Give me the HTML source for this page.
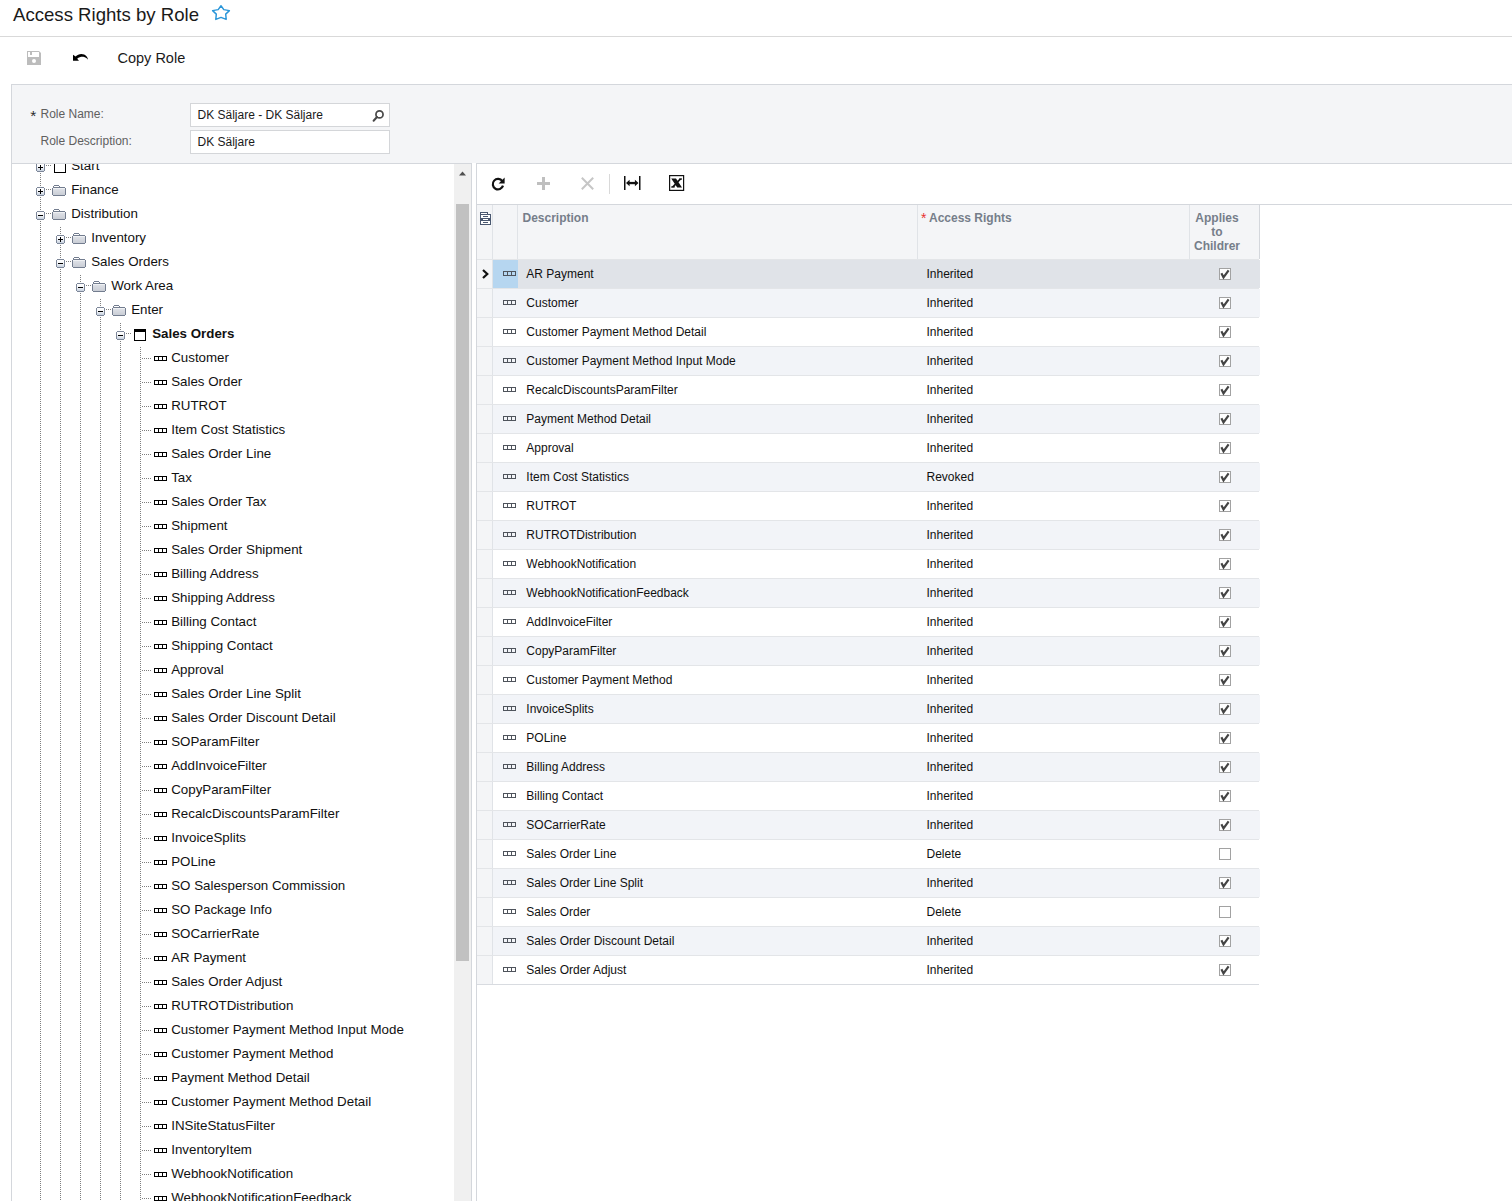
<!DOCTYPE html>
<html><head><meta charset="utf-8"><title>Access Rights by Role</title>
<style>
html,body{margin:0;padding:0;background:#fff;width:1512px;height:1201px;overflow:hidden}
body{position:relative;font-family:"Liberation Sans", sans-serif}
.a{position:absolute}
.t{position:absolute;white-space:nowrap}
svg.a{overflow:visible}
</style></head><body>
<div class="t" style="left:13px;top:4.06px;font-size:18.6px;line-height:21px;color:#1a1a1a;font-weight:normal;">Access Rights by Role</div>
<svg class="a" style="left:211px;top:4px" width="20" height="18" viewBox="0 0 20 18"><path d="M10 1.8 L12.8 5.6 L18.4 6.6 L14.7 10.1 L15.2 15.4 L10 13.4 L4.8 15.4 L5.3 10.1 L1.6 6.6 L7.2 5.6 Z" fill="none" stroke="#2a96d9" stroke-width="1.45" stroke-linejoin="round"/></svg>
<div class="a" style="left:0;top:36px;width:1512px;height:1px;background:#d9d9d9"></div>
<svg class="a" style="left:27px;top:51px" width="14" height="14" viewBox="0 0 14 14"><path d="M0 0 H12 L14 2 V14 H0 Z" fill="#bcbcbc"/><rect x="1" y="1" width="11" height="5" fill="#fff"/><rect x="3" y="1" width="2" height="3" fill="#bcbcbc"/><circle cx="7" cy="10" r="2" fill="#fff"/></svg>
<svg class="a" style="left:68px;top:46px" width="26" height="22" viewBox="0 0 26 22"><path d="M5 8.7 L5 14.8 L11 14.8 L9.2 12.8 C11.2 11 13.8 10.6 16.2 11 C17.8 11.4 19 12.3 19.9 13.8 C19.8 11.6 18.5 9.6 16.2 8.6 C13.2 7.5 9.8 8.2 7.6 10.6 Z" fill="#000"/></svg>
<div class="t" style="left:117.5px;top:50.18px;font-size:14.5px;line-height:17px;color:#1a1a1a;font-weight:normal;">Copy Role</div>
<div class="a" style="left:11px;top:84px;width:1501px;height:79px;background:#f4f5f7;border-top:1px solid #d4d7dc;border-left:1px solid #d4d7dc;box-sizing:border-box"></div>
<div class="t" style="left:30.3px;top:106.83px;font-size:15.5px;line-height:18px;color:#2a2a2a;font-weight:normal;">*</div>
<div class="t" style="left:40.5px;top:106.84px;font-size:12px;line-height:14px;color:#5f5f5f;font-weight:normal;">Role Name:</div>
<div class="t" style="left:40.5px;top:133.84px;font-size:12px;line-height:14px;color:#5f5f5f;font-weight:normal;">Role Description:</div>
<div class="a" style="left:190px;top:103px;width:200px;height:24px;background:#fff;border:1px solid #d4d6d9;box-sizing:border-box"></div>
<div class="a" style="left:190px;top:130px;width:200px;height:24px;background:#fff;border:1px solid #d4d6d9;box-sizing:border-box"></div>
<div class="t" style="left:197.5px;top:107.54px;font-size:12px;line-height:14px;color:#1a1a1a;font-weight:normal;">DK Säljare - DK Säljare</div>
<div class="t" style="left:197.5px;top:134.54px;font-size:12px;line-height:14px;color:#1a1a1a;font-weight:normal;">DK Säljare</div>
<svg class="a" style="left:372px;top:110px" width="12" height="12" viewBox="0 0 12 12"><circle cx="7.5" cy="4.4" r="3.55" fill="none" stroke="#4a4a4a" stroke-width="1.75"/><path d="M5 7 L1.6 10.7" stroke="#4a4a4a" stroke-width="2" stroke-linecap="round"/></svg>
<div class="a" style="left:11px;top:163px;width:461px;height:1px;background:#d4d7dc"></div><div class="a" style="left:476px;top:163px;width:1036px;height:1px;background:#d4d7dc"></div><div class="a" style="left:472px;top:163px;width:4px;height:1px;background:#fff"></div>
<svg width="0" height="0" style="position:absolute">
<defs>
<linearGradient id="gx" x1="0" y1="0" x2="0" y2="1"><stop offset="0" stop-color="#ffffff"/><stop offset="0.45" stop-color="#f4f6f9"/><stop offset="1" stop-color="#c6d0de"/></linearGradient>
<linearGradient id="gf" x1="0" y1="0" x2="0" y2="1"><stop offset="0" stop-color="#fafbfc"/><stop offset="0.2" stop-color="#dcdfe5"/><stop offset="1" stop-color="#c9cdd5"/></linearGradient>
<g id="expbox" shape-rendering="crispEdges">
<rect x="1" y="1" width="7" height="7" fill="url(#gx)"/>
<rect x="1" y="0" width="7" height="1" fill="#7d8799"/><rect x="1" y="8" width="7" height="1" fill="#7d8799"/>
<rect x="0" y="1" width="1" height="7" fill="#7d8799"/><rect x="8" y="1" width="1" height="7" fill="#7d8799"/>
</g>
<g id="plus" shape-rendering="crispEdges"><use href="#expbox"/><rect x="2" y="4" width="5" height="1" fill="#000"/><rect x="4" y="2" width="1" height="5" fill="#000"/></g>
<g id="minus" shape-rendering="crispEdges"><use href="#expbox"/><rect x="2" y="4" width="5" height="1" fill="#000"/></g>
<g id="fold" shape-rendering="crispEdges">
<rect x="2" y="0" width="5" height="1" fill="#737d8f"/><rect x="1" y="1" width="1" height="1" fill="#737d8f"/><rect x="2" y="1" width="5" height="1" fill="#fff"/><rect x="7" y="1" width="1" height="1" fill="#737d8f"/>
<rect x="1" y="2" width="12" height="1" fill="#737d8f"/>
<rect x="1" y="3" width="12" height="7" fill="url(#gf)"/>
<rect x="0" y="3" width="1" height="7" fill="#737d8f"/><rect x="13" y="3" width="1" height="7" fill="#737d8f"/>
<rect x="1" y="10" width="12" height="1" fill="#737d8f"/>
</g>
<g id="win" shape-rendering="crispEdges">
<rect x="0" y="0" width="12" height="3" fill="#000"/><rect x="0" y="3" width="1" height="9" fill="#000"/><rect x="11" y="3" width="1" height="9" fill="#000"/><rect x="0" y="11" width="12" height="1" fill="#000"/>
</g>
<g id="leaf" shape-rendering="crispEdges">
<rect x="0" y="0" width="13" height="1" fill="#000"/><rect x="0" y="4" width="13" height="1" fill="#000"/>
<rect x="0" y="0" width="1" height="5" fill="#000"/><rect x="4" y="0" width="1" height="5" fill="#000"/><rect x="8" y="0" width="1" height="5" fill="#000"/><rect x="12" y="0" width="1" height="5" fill="#000"/>
</g>
<g id="gleaf" shape-rendering="crispEdges">
<rect x="0" y="0" width="13" height="1" fill="#4f545c"/><rect x="0" y="4" width="13" height="1" fill="#4f545c"/>
<rect x="0" y="0" width="1" height="5" fill="#4f545c"/><rect x="4" y="0" width="1" height="5" fill="#4f545c"/><rect x="8" y="0" width="1" height="5" fill="#4f545c"/><rect x="12" y="0" width="1" height="5" fill="#4f545c"/>
</g>
<g id="chk" shape-rendering="crispEdges"><rect x="0.5" y="0.5" width="11" height="11" fill="#fff" stroke="#a2a2a2"/></g>
</defs></svg>
<div class="a" style="left:11px;top:164px;width:443px;height:1037px;overflow:hidden;background:#fff;border-left:1px solid #d4d7dc;box-sizing:border-box"><div class="a" style="left:-12px;top:-164px;width:1512px;height:1201px"><div class="a" style="left:40px;top:165px;width:1px;height:1036px;background:repeating-linear-gradient(to bottom,#7f7f7f 0,#7f7f7f 1px,transparent 1px,transparent 2px)"></div>
<div class="a" style="left:60px;top:227px;width:1px;height:974px;background:repeating-linear-gradient(to bottom,#7f7f7f 0,#7f7f7f 1px,transparent 1px,transparent 2px)"></div>
<div class="a" style="left:80px;top:275px;width:1px;height:926px;background:repeating-linear-gradient(to bottom,#7f7f7f 0,#7f7f7f 1px,transparent 1px,transparent 2px)"></div>
<div class="a" style="left:100px;top:299px;width:1px;height:902px;background:repeating-linear-gradient(to bottom,#7f7f7f 0,#7f7f7f 1px,transparent 1px,transparent 2px)"></div>
<div class="a" style="left:120px;top:323px;width:1px;height:878px;background:repeating-linear-gradient(to bottom,#7f7f7f 0,#7f7f7f 1px,transparent 1px,transparent 2px)"></div>
<div class="a" style="left:140px;top:347px;width:1px;height:854px;background:repeating-linear-gradient(to bottom,#7f7f7f 0,#7f7f7f 1px,transparent 1px,transparent 2px)"></div>
<div class="a" style="left:46px;top:165px;width:6px;height:1px;background:repeating-linear-gradient(to right,#7f7f7f 0,#7f7f7f 1px,transparent 1px,transparent 2px)"></div>
<svg class="a" style="left:36px;top:163px" width="9" height="9"><use href="#plus"/></svg>
<svg class="a" style="left:54px;top:161px" width="12" height="12"><use href="#win"/></svg>
<div class="t" style="left:71.2px;top:157.88px;font-size:13.33px;line-height:15px;color:#111;font-weight:normal;">Start</div>
<div class="a" style="left:46px;top:189px;width:6px;height:1px;background:repeating-linear-gradient(to right,#7f7f7f 0,#7f7f7f 1px,transparent 1px,transparent 2px)"></div>
<svg class="a" style="left:36px;top:187px" width="9" height="9"><use href="#plus"/></svg>
<svg class="a" style="left:52px;top:185px" width="14" height="11"><use href="#fold"/></svg>
<div class="t" style="left:71.2px;top:181.88px;font-size:13.33px;line-height:15px;color:#111;font-weight:normal;">Finance</div>
<div class="a" style="left:46px;top:213px;width:6px;height:1px;background:repeating-linear-gradient(to right,#7f7f7f 0,#7f7f7f 1px,transparent 1px,transparent 2px)"></div>
<svg class="a" style="left:36px;top:211px" width="9" height="9"><use href="#minus"/></svg>
<svg class="a" style="left:52px;top:209px" width="14" height="11"><use href="#fold"/></svg>
<div class="t" style="left:71.2px;top:205.88px;font-size:13.33px;line-height:15px;color:#111;font-weight:normal;">Distribution</div>
<div class="a" style="left:66px;top:237px;width:6px;height:1px;background:repeating-linear-gradient(to right,#7f7f7f 0,#7f7f7f 1px,transparent 1px,transparent 2px)"></div>
<svg class="a" style="left:56px;top:235px" width="9" height="9"><use href="#plus"/></svg>
<svg class="a" style="left:72px;top:233px" width="14" height="11"><use href="#fold"/></svg>
<div class="t" style="left:91.2px;top:229.88px;font-size:13.33px;line-height:15px;color:#111;font-weight:normal;">Inventory</div>
<div class="a" style="left:66px;top:261px;width:6px;height:1px;background:repeating-linear-gradient(to right,#7f7f7f 0,#7f7f7f 1px,transparent 1px,transparent 2px)"></div>
<svg class="a" style="left:56px;top:259px" width="9" height="9"><use href="#minus"/></svg>
<svg class="a" style="left:72px;top:257px" width="14" height="11"><use href="#fold"/></svg>
<div class="t" style="left:91.2px;top:253.88px;font-size:13.33px;line-height:15px;color:#111;font-weight:normal;">Sales Orders</div>
<div class="a" style="left:86px;top:285px;width:6px;height:1px;background:repeating-linear-gradient(to right,#7f7f7f 0,#7f7f7f 1px,transparent 1px,transparent 2px)"></div>
<svg class="a" style="left:76px;top:283px" width="9" height="9"><use href="#minus"/></svg>
<svg class="a" style="left:92px;top:281px" width="14" height="11"><use href="#fold"/></svg>
<div class="t" style="left:111.2px;top:277.88px;font-size:13.33px;line-height:15px;color:#111;font-weight:normal;">Work Area</div>
<div class="a" style="left:106px;top:309px;width:6px;height:1px;background:repeating-linear-gradient(to right,#7f7f7f 0,#7f7f7f 1px,transparent 1px,transparent 2px)"></div>
<svg class="a" style="left:96px;top:307px" width="9" height="9"><use href="#minus"/></svg>
<svg class="a" style="left:112px;top:305px" width="14" height="11"><use href="#fold"/></svg>
<div class="t" style="left:131.2px;top:301.88px;font-size:13.33px;line-height:15px;color:#111;font-weight:normal;">Enter</div>
<div class="a" style="left:126px;top:333px;width:6px;height:1px;background:repeating-linear-gradient(to right,#7f7f7f 0,#7f7f7f 1px,transparent 1px,transparent 2px)"></div>
<svg class="a" style="left:116px;top:331px" width="9" height="9"><use href="#minus"/></svg>
<svg class="a" style="left:134px;top:329px" width="12" height="12"><use href="#win"/></svg>
<div class="t" style="left:152.2px;top:325.88px;font-size:13.33px;line-height:15px;color:#111;font-weight:bold;">Sales Orders</div>
<div class="a" style="left:142px;top:358px;width:10px;height:1px;background:repeating-linear-gradient(to right,#7f7f7f 0,#7f7f7f 1px,transparent 1px,transparent 2px)"></div>
<svg class="a" style="left:154px;top:356px" width="13" height="5"><use href="#leaf"/></svg>
<div class="t" style="left:171.2px;top:349.88px;font-size:13.33px;line-height:15px;color:#111;font-weight:normal;">Customer</div>
<div class="a" style="left:142px;top:382px;width:10px;height:1px;background:repeating-linear-gradient(to right,#7f7f7f 0,#7f7f7f 1px,transparent 1px,transparent 2px)"></div>
<svg class="a" style="left:154px;top:380px" width="13" height="5"><use href="#leaf"/></svg>
<div class="t" style="left:171.2px;top:373.88px;font-size:13.33px;line-height:15px;color:#111;font-weight:normal;">Sales Order</div>
<div class="a" style="left:142px;top:406px;width:10px;height:1px;background:repeating-linear-gradient(to right,#7f7f7f 0,#7f7f7f 1px,transparent 1px,transparent 2px)"></div>
<svg class="a" style="left:154px;top:404px" width="13" height="5"><use href="#leaf"/></svg>
<div class="t" style="left:171.2px;top:397.88px;font-size:13.33px;line-height:15px;color:#111;font-weight:normal;">RUTROT</div>
<div class="a" style="left:142px;top:430px;width:10px;height:1px;background:repeating-linear-gradient(to right,#7f7f7f 0,#7f7f7f 1px,transparent 1px,transparent 2px)"></div>
<svg class="a" style="left:154px;top:428px" width="13" height="5"><use href="#leaf"/></svg>
<div class="t" style="left:171.2px;top:421.88px;font-size:13.33px;line-height:15px;color:#111;font-weight:normal;">Item Cost Statistics</div>
<div class="a" style="left:142px;top:454px;width:10px;height:1px;background:repeating-linear-gradient(to right,#7f7f7f 0,#7f7f7f 1px,transparent 1px,transparent 2px)"></div>
<svg class="a" style="left:154px;top:452px" width="13" height="5"><use href="#leaf"/></svg>
<div class="t" style="left:171.2px;top:445.88px;font-size:13.33px;line-height:15px;color:#111;font-weight:normal;">Sales Order Line</div>
<div class="a" style="left:142px;top:478px;width:10px;height:1px;background:repeating-linear-gradient(to right,#7f7f7f 0,#7f7f7f 1px,transparent 1px,transparent 2px)"></div>
<svg class="a" style="left:154px;top:476px" width="13" height="5"><use href="#leaf"/></svg>
<div class="t" style="left:171.2px;top:469.88px;font-size:13.33px;line-height:15px;color:#111;font-weight:normal;">Tax</div>
<div class="a" style="left:142px;top:502px;width:10px;height:1px;background:repeating-linear-gradient(to right,#7f7f7f 0,#7f7f7f 1px,transparent 1px,transparent 2px)"></div>
<svg class="a" style="left:154px;top:500px" width="13" height="5"><use href="#leaf"/></svg>
<div class="t" style="left:171.2px;top:493.88px;font-size:13.33px;line-height:15px;color:#111;font-weight:normal;">Sales Order Tax</div>
<div class="a" style="left:142px;top:526px;width:10px;height:1px;background:repeating-linear-gradient(to right,#7f7f7f 0,#7f7f7f 1px,transparent 1px,transparent 2px)"></div>
<svg class="a" style="left:154px;top:524px" width="13" height="5"><use href="#leaf"/></svg>
<div class="t" style="left:171.2px;top:517.88px;font-size:13.33px;line-height:15px;color:#111;font-weight:normal;">Shipment</div>
<div class="a" style="left:142px;top:550px;width:10px;height:1px;background:repeating-linear-gradient(to right,#7f7f7f 0,#7f7f7f 1px,transparent 1px,transparent 2px)"></div>
<svg class="a" style="left:154px;top:548px" width="13" height="5"><use href="#leaf"/></svg>
<div class="t" style="left:171.2px;top:541.88px;font-size:13.33px;line-height:15px;color:#111;font-weight:normal;">Sales Order Shipment</div>
<div class="a" style="left:142px;top:574px;width:10px;height:1px;background:repeating-linear-gradient(to right,#7f7f7f 0,#7f7f7f 1px,transparent 1px,transparent 2px)"></div>
<svg class="a" style="left:154px;top:572px" width="13" height="5"><use href="#leaf"/></svg>
<div class="t" style="left:171.2px;top:565.88px;font-size:13.33px;line-height:15px;color:#111;font-weight:normal;">Billing Address</div>
<div class="a" style="left:142px;top:598px;width:10px;height:1px;background:repeating-linear-gradient(to right,#7f7f7f 0,#7f7f7f 1px,transparent 1px,transparent 2px)"></div>
<svg class="a" style="left:154px;top:596px" width="13" height="5"><use href="#leaf"/></svg>
<div class="t" style="left:171.2px;top:589.88px;font-size:13.33px;line-height:15px;color:#111;font-weight:normal;">Shipping Address</div>
<div class="a" style="left:142px;top:622px;width:10px;height:1px;background:repeating-linear-gradient(to right,#7f7f7f 0,#7f7f7f 1px,transparent 1px,transparent 2px)"></div>
<svg class="a" style="left:154px;top:620px" width="13" height="5"><use href="#leaf"/></svg>
<div class="t" style="left:171.2px;top:613.88px;font-size:13.33px;line-height:15px;color:#111;font-weight:normal;">Billing Contact</div>
<div class="a" style="left:142px;top:646px;width:10px;height:1px;background:repeating-linear-gradient(to right,#7f7f7f 0,#7f7f7f 1px,transparent 1px,transparent 2px)"></div>
<svg class="a" style="left:154px;top:644px" width="13" height="5"><use href="#leaf"/></svg>
<div class="t" style="left:171.2px;top:637.88px;font-size:13.33px;line-height:15px;color:#111;font-weight:normal;">Shipping Contact</div>
<div class="a" style="left:142px;top:670px;width:10px;height:1px;background:repeating-linear-gradient(to right,#7f7f7f 0,#7f7f7f 1px,transparent 1px,transparent 2px)"></div>
<svg class="a" style="left:154px;top:668px" width="13" height="5"><use href="#leaf"/></svg>
<div class="t" style="left:171.2px;top:661.88px;font-size:13.33px;line-height:15px;color:#111;font-weight:normal;">Approval</div>
<div class="a" style="left:142px;top:694px;width:10px;height:1px;background:repeating-linear-gradient(to right,#7f7f7f 0,#7f7f7f 1px,transparent 1px,transparent 2px)"></div>
<svg class="a" style="left:154px;top:692px" width="13" height="5"><use href="#leaf"/></svg>
<div class="t" style="left:171.2px;top:685.88px;font-size:13.33px;line-height:15px;color:#111;font-weight:normal;">Sales Order Line Split</div>
<div class="a" style="left:142px;top:718px;width:10px;height:1px;background:repeating-linear-gradient(to right,#7f7f7f 0,#7f7f7f 1px,transparent 1px,transparent 2px)"></div>
<svg class="a" style="left:154px;top:716px" width="13" height="5"><use href="#leaf"/></svg>
<div class="t" style="left:171.2px;top:709.88px;font-size:13.33px;line-height:15px;color:#111;font-weight:normal;">Sales Order Discount Detail</div>
<div class="a" style="left:142px;top:742px;width:10px;height:1px;background:repeating-linear-gradient(to right,#7f7f7f 0,#7f7f7f 1px,transparent 1px,transparent 2px)"></div>
<svg class="a" style="left:154px;top:740px" width="13" height="5"><use href="#leaf"/></svg>
<div class="t" style="left:171.2px;top:733.88px;font-size:13.33px;line-height:15px;color:#111;font-weight:normal;">SOParamFilter</div>
<div class="a" style="left:142px;top:766px;width:10px;height:1px;background:repeating-linear-gradient(to right,#7f7f7f 0,#7f7f7f 1px,transparent 1px,transparent 2px)"></div>
<svg class="a" style="left:154px;top:764px" width="13" height="5"><use href="#leaf"/></svg>
<div class="t" style="left:171.2px;top:757.88px;font-size:13.33px;line-height:15px;color:#111;font-weight:normal;">AddInvoiceFilter</div>
<div class="a" style="left:142px;top:790px;width:10px;height:1px;background:repeating-linear-gradient(to right,#7f7f7f 0,#7f7f7f 1px,transparent 1px,transparent 2px)"></div>
<svg class="a" style="left:154px;top:788px" width="13" height="5"><use href="#leaf"/></svg>
<div class="t" style="left:171.2px;top:781.88px;font-size:13.33px;line-height:15px;color:#111;font-weight:normal;">CopyParamFilter</div>
<div class="a" style="left:142px;top:814px;width:10px;height:1px;background:repeating-linear-gradient(to right,#7f7f7f 0,#7f7f7f 1px,transparent 1px,transparent 2px)"></div>
<svg class="a" style="left:154px;top:812px" width="13" height="5"><use href="#leaf"/></svg>
<div class="t" style="left:171.2px;top:805.88px;font-size:13.33px;line-height:15px;color:#111;font-weight:normal;">RecalcDiscountsParamFilter</div>
<div class="a" style="left:142px;top:838px;width:10px;height:1px;background:repeating-linear-gradient(to right,#7f7f7f 0,#7f7f7f 1px,transparent 1px,transparent 2px)"></div>
<svg class="a" style="left:154px;top:836px" width="13" height="5"><use href="#leaf"/></svg>
<div class="t" style="left:171.2px;top:829.88px;font-size:13.33px;line-height:15px;color:#111;font-weight:normal;">InvoiceSplits</div>
<div class="a" style="left:142px;top:862px;width:10px;height:1px;background:repeating-linear-gradient(to right,#7f7f7f 0,#7f7f7f 1px,transparent 1px,transparent 2px)"></div>
<svg class="a" style="left:154px;top:860px" width="13" height="5"><use href="#leaf"/></svg>
<div class="t" style="left:171.2px;top:853.88px;font-size:13.33px;line-height:15px;color:#111;font-weight:normal;">POLine</div>
<div class="a" style="left:142px;top:886px;width:10px;height:1px;background:repeating-linear-gradient(to right,#7f7f7f 0,#7f7f7f 1px,transparent 1px,transparent 2px)"></div>
<svg class="a" style="left:154px;top:884px" width="13" height="5"><use href="#leaf"/></svg>
<div class="t" style="left:171.2px;top:877.88px;font-size:13.33px;line-height:15px;color:#111;font-weight:normal;">SO Salesperson Commission</div>
<div class="a" style="left:142px;top:910px;width:10px;height:1px;background:repeating-linear-gradient(to right,#7f7f7f 0,#7f7f7f 1px,transparent 1px,transparent 2px)"></div>
<svg class="a" style="left:154px;top:908px" width="13" height="5"><use href="#leaf"/></svg>
<div class="t" style="left:171.2px;top:901.88px;font-size:13.33px;line-height:15px;color:#111;font-weight:normal;">SO Package Info</div>
<div class="a" style="left:142px;top:934px;width:10px;height:1px;background:repeating-linear-gradient(to right,#7f7f7f 0,#7f7f7f 1px,transparent 1px,transparent 2px)"></div>
<svg class="a" style="left:154px;top:932px" width="13" height="5"><use href="#leaf"/></svg>
<div class="t" style="left:171.2px;top:925.88px;font-size:13.33px;line-height:15px;color:#111;font-weight:normal;">SOCarrierRate</div>
<div class="a" style="left:142px;top:958px;width:10px;height:1px;background:repeating-linear-gradient(to right,#7f7f7f 0,#7f7f7f 1px,transparent 1px,transparent 2px)"></div>
<svg class="a" style="left:154px;top:956px" width="13" height="5"><use href="#leaf"/></svg>
<div class="t" style="left:171.2px;top:949.88px;font-size:13.33px;line-height:15px;color:#111;font-weight:normal;">AR Payment</div>
<div class="a" style="left:142px;top:982px;width:10px;height:1px;background:repeating-linear-gradient(to right,#7f7f7f 0,#7f7f7f 1px,transparent 1px,transparent 2px)"></div>
<svg class="a" style="left:154px;top:980px" width="13" height="5"><use href="#leaf"/></svg>
<div class="t" style="left:171.2px;top:973.88px;font-size:13.33px;line-height:15px;color:#111;font-weight:normal;">Sales Order Adjust</div>
<div class="a" style="left:142px;top:1006px;width:10px;height:1px;background:repeating-linear-gradient(to right,#7f7f7f 0,#7f7f7f 1px,transparent 1px,transparent 2px)"></div>
<svg class="a" style="left:154px;top:1004px" width="13" height="5"><use href="#leaf"/></svg>
<div class="t" style="left:171.2px;top:997.88px;font-size:13.33px;line-height:15px;color:#111;font-weight:normal;">RUTROTDistribution</div>
<div class="a" style="left:142px;top:1030px;width:10px;height:1px;background:repeating-linear-gradient(to right,#7f7f7f 0,#7f7f7f 1px,transparent 1px,transparent 2px)"></div>
<svg class="a" style="left:154px;top:1028px" width="13" height="5"><use href="#leaf"/></svg>
<div class="t" style="left:171.2px;top:1021.88px;font-size:13.33px;line-height:15px;color:#111;font-weight:normal;">Customer Payment Method Input Mode</div>
<div class="a" style="left:142px;top:1054px;width:10px;height:1px;background:repeating-linear-gradient(to right,#7f7f7f 0,#7f7f7f 1px,transparent 1px,transparent 2px)"></div>
<svg class="a" style="left:154px;top:1052px" width="13" height="5"><use href="#leaf"/></svg>
<div class="t" style="left:171.2px;top:1045.88px;font-size:13.33px;line-height:15px;color:#111;font-weight:normal;">Customer Payment Method</div>
<div class="a" style="left:142px;top:1078px;width:10px;height:1px;background:repeating-linear-gradient(to right,#7f7f7f 0,#7f7f7f 1px,transparent 1px,transparent 2px)"></div>
<svg class="a" style="left:154px;top:1076px" width="13" height="5"><use href="#leaf"/></svg>
<div class="t" style="left:171.2px;top:1069.88px;font-size:13.33px;line-height:15px;color:#111;font-weight:normal;">Payment Method Detail</div>
<div class="a" style="left:142px;top:1102px;width:10px;height:1px;background:repeating-linear-gradient(to right,#7f7f7f 0,#7f7f7f 1px,transparent 1px,transparent 2px)"></div>
<svg class="a" style="left:154px;top:1100px" width="13" height="5"><use href="#leaf"/></svg>
<div class="t" style="left:171.2px;top:1093.88px;font-size:13.33px;line-height:15px;color:#111;font-weight:normal;">Customer Payment Method Detail</div>
<div class="a" style="left:142px;top:1126px;width:10px;height:1px;background:repeating-linear-gradient(to right,#7f7f7f 0,#7f7f7f 1px,transparent 1px,transparent 2px)"></div>
<svg class="a" style="left:154px;top:1124px" width="13" height="5"><use href="#leaf"/></svg>
<div class="t" style="left:171.2px;top:1117.88px;font-size:13.33px;line-height:15px;color:#111;font-weight:normal;">INSiteStatusFilter</div>
<div class="a" style="left:142px;top:1150px;width:10px;height:1px;background:repeating-linear-gradient(to right,#7f7f7f 0,#7f7f7f 1px,transparent 1px,transparent 2px)"></div>
<svg class="a" style="left:154px;top:1148px" width="13" height="5"><use href="#leaf"/></svg>
<div class="t" style="left:171.2px;top:1141.88px;font-size:13.33px;line-height:15px;color:#111;font-weight:normal;">InventoryItem</div>
<div class="a" style="left:142px;top:1174px;width:10px;height:1px;background:repeating-linear-gradient(to right,#7f7f7f 0,#7f7f7f 1px,transparent 1px,transparent 2px)"></div>
<svg class="a" style="left:154px;top:1172px" width="13" height="5"><use href="#leaf"/></svg>
<div class="t" style="left:171.2px;top:1165.88px;font-size:13.33px;line-height:15px;color:#111;font-weight:normal;">WebhookNotification</div>
<div class="a" style="left:142px;top:1198px;width:10px;height:1px;background:repeating-linear-gradient(to right,#7f7f7f 0,#7f7f7f 1px,transparent 1px,transparent 2px)"></div>
<svg class="a" style="left:154px;top:1196px" width="13" height="5"><use href="#leaf"/></svg>
<div class="t" style="left:171.2px;top:1189.88px;font-size:13.33px;line-height:15px;color:#111;font-weight:normal;">WebhookNotificationFeedback</div></div></div>
<div class="a" style="left:454px;top:164px;width:17px;height:1037px;background:#f0f0f0"></div><div class="a" style="left:471px;top:163px;width:1px;height:1038px;background:#d4d7dc"></div><div class="a" style="left:456px;top:204px;width:13px;height:757px;background:#c1c1c1"></div><svg class="a" style="left:459px;top:171px" width="8" height="5"><path d="M0 4.5 L3.5 0.5 L7 4.5 Z" fill="#505050"/></svg><div class="a" style="left:472px;top:163px;width:4px;height:1038px;background:#fff"></div>
<div class="a" style="left:476px;top:163px;width:1px;height:1038px;background:#d4d7dc"></div>
<div class="a" style="left:477px;top:204px;width:1035px;height:1px;background:#d4d7dc"></div>
<svg class="a" style="left:491px;top:177px" width="14" height="14" viewBox="0 0 14 14"><path d="M11.3 4.2 A5.2 5.2 0 1 0 12 8.6" fill="none" stroke="#111" stroke-width="2.2"/><path d="M13.6 0.6 L13.6 6.6 L7.6 6.6 Z" fill="#111"/></svg>
<svg class="a" style="left:537px;top:177px" width="13" height="13" viewBox="0 0 13 13" shape-rendering="crispEdges"><rect x="5" y="0" width="3" height="13" fill="#bfbfbf"/><rect x="0" y="5" width="13" height="3" fill="#bfbfbf"/></svg>
<svg class="a" style="left:581px;top:177px" width="13" height="13" viewBox="0 0 13 13"><path d="M0.8 0.8 L12.2 12.2 M12.2 0.8 L0.8 12.2" stroke="#c6c6c6" stroke-width="2"/></svg>
<div class="a" style="left:609px;top:174px;width:1px;height:20px;background:#d9d9d9"></div>
<svg class="a" style="left:624px;top:176px" width="17" height="14" viewBox="0 0 17 14"><rect x="0" y="0" width="1.5" height="14" fill="#111"/><rect x="15" y="0" width="1.5" height="14" fill="#111"/><rect x="4" y="5.9" width="8.5" height="2.3" fill="#111"/><path d="M2 7.05 L5.6 3.8 L5.6 10.3 Z M14.5 7.05 L10.9 3.8 L10.9 10.3 Z" fill="#111"/></svg>
<svg class="a" style="left:669px;top:175px" width="16" height="16" viewBox="0 0 16 16"><rect x="0.6" y="0.6" width="14" height="14.8" fill="#fff" stroke="#111" stroke-width="1.2"/><path d="M2.2 3.6 L7 3.6 L13 12.4 L8.2 12.4 Z M10.6 3.6 L13 3.6 L4.6 12.4 L2.2 12.4 Z" fill="#111"/><rect x="10" y="3.6" width="3" height="1" fill="#111"/><rect x="2.2" y="11.4" width="3.8" height="1" fill="#111"/></svg>
<div class="a" style="left:477px;top:205px;width:782px;height:54px;background:#f4f5f7"></div>
<div class="a" style="left:492px;top:205px;width:1px;height:54px;background:#e0e3e7"></div>
<div class="a" style="left:517px;top:205px;width:1px;height:54px;background:#e0e3e7"></div>
<div class="a" style="left:917px;top:205px;width:1px;height:54px;background:#e0e3e7"></div>
<div class="a" style="left:1189px;top:205px;width:1px;height:54px;background:#e0e3e7"></div>
<div class="a" style="left:1259px;top:205px;width:1px;height:54px;background:#e0e3e7"></div>
<div class="a" style="left:1259px;top:205px;width:1px;height:54px;background:#d4d7dc"></div>
<svg class="a" style="left:480px;top:212px" width="11" height="13" viewBox="0 0 11 13" shape-rendering="crispEdges"><rect x="1" y="1" width="6" height="1" fill="#fff"/><rect x="1" y="3" width="9" height="3" fill="#fff"/><rect x="1" y="9" width="9" height="3" fill="#fff"/><rect x="3" y="7" width="5" height="1" fill="#fff"/><path d="M0 0h8v1h-8zM0 1h1v1h-1zM7 1h1v1h-1zM0 2h11v1h-11zM0 3h1v1h-1zM10 3h1v1h-1zM0 4h1v1h-1zM3 4h5v1h-5zM10 4h1v1h-1zM0 5h1v1h-1zM10 5h1v1h-1zM0 6h11v1h-11zM0 7h3v1h-3zM8 7h3v1h-3zM0 8h11v1h-11zM0 9h1v1h-1zM10 9h1v1h-1zM0 10h1v1h-1zM3 10h5v1h-5zM10 10h1v1h-1zM0 11h1v1h-1zM10 11h1v1h-1zM0 12h11v1h-11z" fill="#4a5870"/></svg>
<div class="t" style="left:522.5px;top:210.84px;font-size:12px;line-height:14px;color:#767e8a;font-weight:bold;">Description</div>
<div class="t" style="left:921px;top:209.65px;font-size:14px;line-height:16px;color:#e8312f;font-weight:normal;">*</div>
<div class="t" style="left:929px;top:210.84px;font-size:12px;line-height:14px;color:#767e8a;font-weight:bold;">Access Rights</div>
<div class="a" style="left:1182.5px;top:205px;width:69px;height:54px"><div style="position:absolute;left:0;top:6.2px;width:69px;text-align:center;font-size:12px;line-height:14px;font-weight:bold;color:#767e8a;white-space:nowrap">Applies<br>to<br>Childrer</div></div>
<div class="a" style="left:477px;top:259px;width:782px;height:1px;background:#e3e5e8"></div>
<div class="a" style="left:477px;top:260px;width:15px;height:28px;background:#f4f5f7"></div>
<div class="a" style="left:492px;top:260px;width:1px;height:28px;background:#e0e3e7"></div>
<div class="a" style="left:493px;top:260px;width:767px;height:28px;background:#e0e3e8"></div>
<div class="a" style="left:493px;top:260px;width:25px;height:28px;background:#b6d6f0"></div>
<svg class="a" style="left:482px;top:268.6px" width="7" height="10" viewBox="0 0 7 10"><path d="M1 1 L5.3 5 L1 9" fill="none" stroke="#111" stroke-width="2.2"/></svg>
<div class="a" style="left:477px;top:288px;width:782px;height:1px;background:#e3e5e8"></div>
<svg class="a" style="left:503px;top:271px" width="13" height="5"><use href="#gleaf"/></svg>
<div class="t" style="left:526.3px;top:266.84px;font-size:12px;line-height:14px;color:#111;font-weight:normal;">AR Payment</div>
<div class="t" style="left:926.5px;top:266.84px;font-size:12px;line-height:14px;color:#111;font-weight:normal;">Inherited</div>
<svg class="a" style="left:1219px;top:268px" width="12" height="12" viewBox="0 0 12 12"><use href="#chk"/><path d="M2.4 5.2 L4.5 9.3 L9.6 2.3" fill="none" stroke="#444" stroke-width="2.2"/></svg>
<div class="a" style="left:477px;top:289px;width:15px;height:28px;background:#f4f5f7"></div>
<div class="a" style="left:492px;top:289px;width:1px;height:28px;background:#e0e3e7"></div>
<div class="a" style="left:493px;top:289px;width:767px;height:28px;background:#f2f4f8"></div>
<div class="a" style="left:477px;top:317px;width:782px;height:1px;background:#e3e5e8"></div>
<svg class="a" style="left:503px;top:300px" width="13" height="5"><use href="#gleaf"/></svg>
<div class="t" style="left:526.3px;top:295.84px;font-size:12px;line-height:14px;color:#111;font-weight:normal;">Customer</div>
<div class="t" style="left:926.5px;top:295.84px;font-size:12px;line-height:14px;color:#111;font-weight:normal;">Inherited</div>
<svg class="a" style="left:1219px;top:297px" width="12" height="12" viewBox="0 0 12 12"><use href="#chk"/><path d="M2.4 5.2 L4.5 9.3 L9.6 2.3" fill="none" stroke="#444" stroke-width="2.2"/></svg>
<div class="a" style="left:477px;top:318px;width:15px;height:28px;background:#f4f5f7"></div>
<div class="a" style="left:492px;top:318px;width:1px;height:28px;background:#e0e3e7"></div>
<div class="a" style="left:493px;top:318px;width:767px;height:28px;background:#ffffff"></div>
<div class="a" style="left:477px;top:346px;width:782px;height:1px;background:#e3e5e8"></div>
<svg class="a" style="left:503px;top:329px" width="13" height="5"><use href="#gleaf"/></svg>
<div class="t" style="left:526.3px;top:324.84px;font-size:12px;line-height:14px;color:#111;font-weight:normal;">Customer Payment Method Detail</div>
<div class="t" style="left:926.5px;top:324.84px;font-size:12px;line-height:14px;color:#111;font-weight:normal;">Inherited</div>
<svg class="a" style="left:1219px;top:326px" width="12" height="12" viewBox="0 0 12 12"><use href="#chk"/><path d="M2.4 5.2 L4.5 9.3 L9.6 2.3" fill="none" stroke="#444" stroke-width="2.2"/></svg>
<div class="a" style="left:477px;top:347px;width:15px;height:28px;background:#f4f5f7"></div>
<div class="a" style="left:492px;top:347px;width:1px;height:28px;background:#e0e3e7"></div>
<div class="a" style="left:493px;top:347px;width:767px;height:28px;background:#f2f4f8"></div>
<div class="a" style="left:477px;top:375px;width:782px;height:1px;background:#e3e5e8"></div>
<svg class="a" style="left:503px;top:358px" width="13" height="5"><use href="#gleaf"/></svg>
<div class="t" style="left:526.3px;top:353.84px;font-size:12px;line-height:14px;color:#111;font-weight:normal;">Customer Payment Method Input Mode</div>
<div class="t" style="left:926.5px;top:353.84px;font-size:12px;line-height:14px;color:#111;font-weight:normal;">Inherited</div>
<svg class="a" style="left:1219px;top:355px" width="12" height="12" viewBox="0 0 12 12"><use href="#chk"/><path d="M2.4 5.2 L4.5 9.3 L9.6 2.3" fill="none" stroke="#444" stroke-width="2.2"/></svg>
<div class="a" style="left:477px;top:376px;width:15px;height:28px;background:#f4f5f7"></div>
<div class="a" style="left:492px;top:376px;width:1px;height:28px;background:#e0e3e7"></div>
<div class="a" style="left:493px;top:376px;width:767px;height:28px;background:#ffffff"></div>
<div class="a" style="left:477px;top:404px;width:782px;height:1px;background:#e3e5e8"></div>
<svg class="a" style="left:503px;top:387px" width="13" height="5"><use href="#gleaf"/></svg>
<div class="t" style="left:526.3px;top:382.84px;font-size:12px;line-height:14px;color:#111;font-weight:normal;">RecalcDiscountsParamFilter</div>
<div class="t" style="left:926.5px;top:382.84px;font-size:12px;line-height:14px;color:#111;font-weight:normal;">Inherited</div>
<svg class="a" style="left:1219px;top:384px" width="12" height="12" viewBox="0 0 12 12"><use href="#chk"/><path d="M2.4 5.2 L4.5 9.3 L9.6 2.3" fill="none" stroke="#444" stroke-width="2.2"/></svg>
<div class="a" style="left:477px;top:405px;width:15px;height:28px;background:#f4f5f7"></div>
<div class="a" style="left:492px;top:405px;width:1px;height:28px;background:#e0e3e7"></div>
<div class="a" style="left:493px;top:405px;width:767px;height:28px;background:#f2f4f8"></div>
<div class="a" style="left:477px;top:433px;width:782px;height:1px;background:#e3e5e8"></div>
<svg class="a" style="left:503px;top:416px" width="13" height="5"><use href="#gleaf"/></svg>
<div class="t" style="left:526.3px;top:411.84px;font-size:12px;line-height:14px;color:#111;font-weight:normal;">Payment Method Detail</div>
<div class="t" style="left:926.5px;top:411.84px;font-size:12px;line-height:14px;color:#111;font-weight:normal;">Inherited</div>
<svg class="a" style="left:1219px;top:413px" width="12" height="12" viewBox="0 0 12 12"><use href="#chk"/><path d="M2.4 5.2 L4.5 9.3 L9.6 2.3" fill="none" stroke="#444" stroke-width="2.2"/></svg>
<div class="a" style="left:477px;top:434px;width:15px;height:28px;background:#f4f5f7"></div>
<div class="a" style="left:492px;top:434px;width:1px;height:28px;background:#e0e3e7"></div>
<div class="a" style="left:493px;top:434px;width:767px;height:28px;background:#ffffff"></div>
<div class="a" style="left:477px;top:462px;width:782px;height:1px;background:#e3e5e8"></div>
<svg class="a" style="left:503px;top:445px" width="13" height="5"><use href="#gleaf"/></svg>
<div class="t" style="left:526.3px;top:440.84px;font-size:12px;line-height:14px;color:#111;font-weight:normal;">Approval</div>
<div class="t" style="left:926.5px;top:440.84px;font-size:12px;line-height:14px;color:#111;font-weight:normal;">Inherited</div>
<svg class="a" style="left:1219px;top:442px" width="12" height="12" viewBox="0 0 12 12"><use href="#chk"/><path d="M2.4 5.2 L4.5 9.3 L9.6 2.3" fill="none" stroke="#444" stroke-width="2.2"/></svg>
<div class="a" style="left:477px;top:463px;width:15px;height:28px;background:#f4f5f7"></div>
<div class="a" style="left:492px;top:463px;width:1px;height:28px;background:#e0e3e7"></div>
<div class="a" style="left:493px;top:463px;width:767px;height:28px;background:#f2f4f8"></div>
<div class="a" style="left:477px;top:491px;width:782px;height:1px;background:#e3e5e8"></div>
<svg class="a" style="left:503px;top:474px" width="13" height="5"><use href="#gleaf"/></svg>
<div class="t" style="left:526.3px;top:469.84px;font-size:12px;line-height:14px;color:#111;font-weight:normal;">Item Cost Statistics</div>
<div class="t" style="left:926.5px;top:469.84px;font-size:12px;line-height:14px;color:#111;font-weight:normal;">Revoked</div>
<svg class="a" style="left:1219px;top:471px" width="12" height="12" viewBox="0 0 12 12"><use href="#chk"/><path d="M2.4 5.2 L4.5 9.3 L9.6 2.3" fill="none" stroke="#444" stroke-width="2.2"/></svg>
<div class="a" style="left:477px;top:492px;width:15px;height:28px;background:#f4f5f7"></div>
<div class="a" style="left:492px;top:492px;width:1px;height:28px;background:#e0e3e7"></div>
<div class="a" style="left:493px;top:492px;width:767px;height:28px;background:#ffffff"></div>
<div class="a" style="left:477px;top:520px;width:782px;height:1px;background:#e3e5e8"></div>
<svg class="a" style="left:503px;top:503px" width="13" height="5"><use href="#gleaf"/></svg>
<div class="t" style="left:526.3px;top:498.84px;font-size:12px;line-height:14px;color:#111;font-weight:normal;">RUTROT</div>
<div class="t" style="left:926.5px;top:498.84px;font-size:12px;line-height:14px;color:#111;font-weight:normal;">Inherited</div>
<svg class="a" style="left:1219px;top:500px" width="12" height="12" viewBox="0 0 12 12"><use href="#chk"/><path d="M2.4 5.2 L4.5 9.3 L9.6 2.3" fill="none" stroke="#444" stroke-width="2.2"/></svg>
<div class="a" style="left:477px;top:521px;width:15px;height:28px;background:#f4f5f7"></div>
<div class="a" style="left:492px;top:521px;width:1px;height:28px;background:#e0e3e7"></div>
<div class="a" style="left:493px;top:521px;width:767px;height:28px;background:#f2f4f8"></div>
<div class="a" style="left:477px;top:549px;width:782px;height:1px;background:#e3e5e8"></div>
<svg class="a" style="left:503px;top:532px" width="13" height="5"><use href="#gleaf"/></svg>
<div class="t" style="left:526.3px;top:527.84px;font-size:12px;line-height:14px;color:#111;font-weight:normal;">RUTROTDistribution</div>
<div class="t" style="left:926.5px;top:527.84px;font-size:12px;line-height:14px;color:#111;font-weight:normal;">Inherited</div>
<svg class="a" style="left:1219px;top:529px" width="12" height="12" viewBox="0 0 12 12"><use href="#chk"/><path d="M2.4 5.2 L4.5 9.3 L9.6 2.3" fill="none" stroke="#444" stroke-width="2.2"/></svg>
<div class="a" style="left:477px;top:550px;width:15px;height:28px;background:#f4f5f7"></div>
<div class="a" style="left:492px;top:550px;width:1px;height:28px;background:#e0e3e7"></div>
<div class="a" style="left:493px;top:550px;width:767px;height:28px;background:#ffffff"></div>
<div class="a" style="left:477px;top:578px;width:782px;height:1px;background:#e3e5e8"></div>
<svg class="a" style="left:503px;top:561px" width="13" height="5"><use href="#gleaf"/></svg>
<div class="t" style="left:526.3px;top:556.84px;font-size:12px;line-height:14px;color:#111;font-weight:normal;">WebhookNotification</div>
<div class="t" style="left:926.5px;top:556.84px;font-size:12px;line-height:14px;color:#111;font-weight:normal;">Inherited</div>
<svg class="a" style="left:1219px;top:558px" width="12" height="12" viewBox="0 0 12 12"><use href="#chk"/><path d="M2.4 5.2 L4.5 9.3 L9.6 2.3" fill="none" stroke="#444" stroke-width="2.2"/></svg>
<div class="a" style="left:477px;top:579px;width:15px;height:28px;background:#f4f5f7"></div>
<div class="a" style="left:492px;top:579px;width:1px;height:28px;background:#e0e3e7"></div>
<div class="a" style="left:493px;top:579px;width:767px;height:28px;background:#f2f4f8"></div>
<div class="a" style="left:477px;top:607px;width:782px;height:1px;background:#e3e5e8"></div>
<svg class="a" style="left:503px;top:590px" width="13" height="5"><use href="#gleaf"/></svg>
<div class="t" style="left:526.3px;top:585.84px;font-size:12px;line-height:14px;color:#111;font-weight:normal;">WebhookNotificationFeedback</div>
<div class="t" style="left:926.5px;top:585.84px;font-size:12px;line-height:14px;color:#111;font-weight:normal;">Inherited</div>
<svg class="a" style="left:1219px;top:587px" width="12" height="12" viewBox="0 0 12 12"><use href="#chk"/><path d="M2.4 5.2 L4.5 9.3 L9.6 2.3" fill="none" stroke="#444" stroke-width="2.2"/></svg>
<div class="a" style="left:477px;top:608px;width:15px;height:28px;background:#f4f5f7"></div>
<div class="a" style="left:492px;top:608px;width:1px;height:28px;background:#e0e3e7"></div>
<div class="a" style="left:493px;top:608px;width:767px;height:28px;background:#ffffff"></div>
<div class="a" style="left:477px;top:636px;width:782px;height:1px;background:#e3e5e8"></div>
<svg class="a" style="left:503px;top:619px" width="13" height="5"><use href="#gleaf"/></svg>
<div class="t" style="left:526.3px;top:614.84px;font-size:12px;line-height:14px;color:#111;font-weight:normal;">AddInvoiceFilter</div>
<div class="t" style="left:926.5px;top:614.84px;font-size:12px;line-height:14px;color:#111;font-weight:normal;">Inherited</div>
<svg class="a" style="left:1219px;top:616px" width="12" height="12" viewBox="0 0 12 12"><use href="#chk"/><path d="M2.4 5.2 L4.5 9.3 L9.6 2.3" fill="none" stroke="#444" stroke-width="2.2"/></svg>
<div class="a" style="left:477px;top:637px;width:15px;height:28px;background:#f4f5f7"></div>
<div class="a" style="left:492px;top:637px;width:1px;height:28px;background:#e0e3e7"></div>
<div class="a" style="left:493px;top:637px;width:767px;height:28px;background:#f2f4f8"></div>
<div class="a" style="left:477px;top:665px;width:782px;height:1px;background:#e3e5e8"></div>
<svg class="a" style="left:503px;top:648px" width="13" height="5"><use href="#gleaf"/></svg>
<div class="t" style="left:526.3px;top:643.84px;font-size:12px;line-height:14px;color:#111;font-weight:normal;">CopyParamFilter</div>
<div class="t" style="left:926.5px;top:643.84px;font-size:12px;line-height:14px;color:#111;font-weight:normal;">Inherited</div>
<svg class="a" style="left:1219px;top:645px" width="12" height="12" viewBox="0 0 12 12"><use href="#chk"/><path d="M2.4 5.2 L4.5 9.3 L9.6 2.3" fill="none" stroke="#444" stroke-width="2.2"/></svg>
<div class="a" style="left:477px;top:666px;width:15px;height:28px;background:#f4f5f7"></div>
<div class="a" style="left:492px;top:666px;width:1px;height:28px;background:#e0e3e7"></div>
<div class="a" style="left:493px;top:666px;width:767px;height:28px;background:#ffffff"></div>
<div class="a" style="left:477px;top:694px;width:782px;height:1px;background:#e3e5e8"></div>
<svg class="a" style="left:503px;top:677px" width="13" height="5"><use href="#gleaf"/></svg>
<div class="t" style="left:526.3px;top:672.84px;font-size:12px;line-height:14px;color:#111;font-weight:normal;">Customer Payment Method</div>
<div class="t" style="left:926.5px;top:672.84px;font-size:12px;line-height:14px;color:#111;font-weight:normal;">Inherited</div>
<svg class="a" style="left:1219px;top:674px" width="12" height="12" viewBox="0 0 12 12"><use href="#chk"/><path d="M2.4 5.2 L4.5 9.3 L9.6 2.3" fill="none" stroke="#444" stroke-width="2.2"/></svg>
<div class="a" style="left:477px;top:695px;width:15px;height:28px;background:#f4f5f7"></div>
<div class="a" style="left:492px;top:695px;width:1px;height:28px;background:#e0e3e7"></div>
<div class="a" style="left:493px;top:695px;width:767px;height:28px;background:#f2f4f8"></div>
<div class="a" style="left:477px;top:723px;width:782px;height:1px;background:#e3e5e8"></div>
<svg class="a" style="left:503px;top:706px" width="13" height="5"><use href="#gleaf"/></svg>
<div class="t" style="left:526.3px;top:701.84px;font-size:12px;line-height:14px;color:#111;font-weight:normal;">InvoiceSplits</div>
<div class="t" style="left:926.5px;top:701.84px;font-size:12px;line-height:14px;color:#111;font-weight:normal;">Inherited</div>
<svg class="a" style="left:1219px;top:703px" width="12" height="12" viewBox="0 0 12 12"><use href="#chk"/><path d="M2.4 5.2 L4.5 9.3 L9.6 2.3" fill="none" stroke="#444" stroke-width="2.2"/></svg>
<div class="a" style="left:477px;top:724px;width:15px;height:28px;background:#f4f5f7"></div>
<div class="a" style="left:492px;top:724px;width:1px;height:28px;background:#e0e3e7"></div>
<div class="a" style="left:493px;top:724px;width:767px;height:28px;background:#ffffff"></div>
<div class="a" style="left:477px;top:752px;width:782px;height:1px;background:#e3e5e8"></div>
<svg class="a" style="left:503px;top:735px" width="13" height="5"><use href="#gleaf"/></svg>
<div class="t" style="left:526.3px;top:730.84px;font-size:12px;line-height:14px;color:#111;font-weight:normal;">POLine</div>
<div class="t" style="left:926.5px;top:730.84px;font-size:12px;line-height:14px;color:#111;font-weight:normal;">Inherited</div>
<svg class="a" style="left:1219px;top:732px" width="12" height="12" viewBox="0 0 12 12"><use href="#chk"/><path d="M2.4 5.2 L4.5 9.3 L9.6 2.3" fill="none" stroke="#444" stroke-width="2.2"/></svg>
<div class="a" style="left:477px;top:753px;width:15px;height:28px;background:#f4f5f7"></div>
<div class="a" style="left:492px;top:753px;width:1px;height:28px;background:#e0e3e7"></div>
<div class="a" style="left:493px;top:753px;width:767px;height:28px;background:#f2f4f8"></div>
<div class="a" style="left:477px;top:781px;width:782px;height:1px;background:#e3e5e8"></div>
<svg class="a" style="left:503px;top:764px" width="13" height="5"><use href="#gleaf"/></svg>
<div class="t" style="left:526.3px;top:759.84px;font-size:12px;line-height:14px;color:#111;font-weight:normal;">Billing Address</div>
<div class="t" style="left:926.5px;top:759.84px;font-size:12px;line-height:14px;color:#111;font-weight:normal;">Inherited</div>
<svg class="a" style="left:1219px;top:761px" width="12" height="12" viewBox="0 0 12 12"><use href="#chk"/><path d="M2.4 5.2 L4.5 9.3 L9.6 2.3" fill="none" stroke="#444" stroke-width="2.2"/></svg>
<div class="a" style="left:477px;top:782px;width:15px;height:28px;background:#f4f5f7"></div>
<div class="a" style="left:492px;top:782px;width:1px;height:28px;background:#e0e3e7"></div>
<div class="a" style="left:493px;top:782px;width:767px;height:28px;background:#ffffff"></div>
<div class="a" style="left:477px;top:810px;width:782px;height:1px;background:#e3e5e8"></div>
<svg class="a" style="left:503px;top:793px" width="13" height="5"><use href="#gleaf"/></svg>
<div class="t" style="left:526.3px;top:788.84px;font-size:12px;line-height:14px;color:#111;font-weight:normal;">Billing Contact</div>
<div class="t" style="left:926.5px;top:788.84px;font-size:12px;line-height:14px;color:#111;font-weight:normal;">Inherited</div>
<svg class="a" style="left:1219px;top:790px" width="12" height="12" viewBox="0 0 12 12"><use href="#chk"/><path d="M2.4 5.2 L4.5 9.3 L9.6 2.3" fill="none" stroke="#444" stroke-width="2.2"/></svg>
<div class="a" style="left:477px;top:811px;width:15px;height:28px;background:#f4f5f7"></div>
<div class="a" style="left:492px;top:811px;width:1px;height:28px;background:#e0e3e7"></div>
<div class="a" style="left:493px;top:811px;width:767px;height:28px;background:#f2f4f8"></div>
<div class="a" style="left:477px;top:839px;width:782px;height:1px;background:#e3e5e8"></div>
<svg class="a" style="left:503px;top:822px" width="13" height="5"><use href="#gleaf"/></svg>
<div class="t" style="left:526.3px;top:817.84px;font-size:12px;line-height:14px;color:#111;font-weight:normal;">SOCarrierRate</div>
<div class="t" style="left:926.5px;top:817.84px;font-size:12px;line-height:14px;color:#111;font-weight:normal;">Inherited</div>
<svg class="a" style="left:1219px;top:819px" width="12" height="12" viewBox="0 0 12 12"><use href="#chk"/><path d="M2.4 5.2 L4.5 9.3 L9.6 2.3" fill="none" stroke="#444" stroke-width="2.2"/></svg>
<div class="a" style="left:477px;top:840px;width:15px;height:28px;background:#f4f5f7"></div>
<div class="a" style="left:492px;top:840px;width:1px;height:28px;background:#e0e3e7"></div>
<div class="a" style="left:493px;top:840px;width:767px;height:28px;background:#ffffff"></div>
<div class="a" style="left:477px;top:868px;width:782px;height:1px;background:#e3e5e8"></div>
<svg class="a" style="left:503px;top:851px" width="13" height="5"><use href="#gleaf"/></svg>
<div class="t" style="left:526.3px;top:846.84px;font-size:12px;line-height:14px;color:#111;font-weight:normal;">Sales Order Line</div>
<div class="t" style="left:926.5px;top:846.84px;font-size:12px;line-height:14px;color:#111;font-weight:normal;">Delete</div>
<svg class="a" style="left:1219px;top:848px" width="12" height="12" viewBox="0 0 12 12"><use href="#chk"/></svg>
<div class="a" style="left:477px;top:869px;width:15px;height:28px;background:#f4f5f7"></div>
<div class="a" style="left:492px;top:869px;width:1px;height:28px;background:#e0e3e7"></div>
<div class="a" style="left:493px;top:869px;width:767px;height:28px;background:#f2f4f8"></div>
<div class="a" style="left:477px;top:897px;width:782px;height:1px;background:#e3e5e8"></div>
<svg class="a" style="left:503px;top:880px" width="13" height="5"><use href="#gleaf"/></svg>
<div class="t" style="left:526.3px;top:875.84px;font-size:12px;line-height:14px;color:#111;font-weight:normal;">Sales Order Line Split</div>
<div class="t" style="left:926.5px;top:875.84px;font-size:12px;line-height:14px;color:#111;font-weight:normal;">Inherited</div>
<svg class="a" style="left:1219px;top:877px" width="12" height="12" viewBox="0 0 12 12"><use href="#chk"/><path d="M2.4 5.2 L4.5 9.3 L9.6 2.3" fill="none" stroke="#444" stroke-width="2.2"/></svg>
<div class="a" style="left:477px;top:898px;width:15px;height:28px;background:#f4f5f7"></div>
<div class="a" style="left:492px;top:898px;width:1px;height:28px;background:#e0e3e7"></div>
<div class="a" style="left:493px;top:898px;width:767px;height:28px;background:#ffffff"></div>
<div class="a" style="left:477px;top:926px;width:782px;height:1px;background:#e3e5e8"></div>
<svg class="a" style="left:503px;top:909px" width="13" height="5"><use href="#gleaf"/></svg>
<div class="t" style="left:526.3px;top:904.84px;font-size:12px;line-height:14px;color:#111;font-weight:normal;">Sales Order</div>
<div class="t" style="left:926.5px;top:904.84px;font-size:12px;line-height:14px;color:#111;font-weight:normal;">Delete</div>
<svg class="a" style="left:1219px;top:906px" width="12" height="12" viewBox="0 0 12 12"><use href="#chk"/></svg>
<div class="a" style="left:477px;top:927px;width:15px;height:28px;background:#f4f5f7"></div>
<div class="a" style="left:492px;top:927px;width:1px;height:28px;background:#e0e3e7"></div>
<div class="a" style="left:493px;top:927px;width:767px;height:28px;background:#f2f4f8"></div>
<div class="a" style="left:477px;top:955px;width:782px;height:1px;background:#e3e5e8"></div>
<svg class="a" style="left:503px;top:938px" width="13" height="5"><use href="#gleaf"/></svg>
<div class="t" style="left:526.3px;top:933.84px;font-size:12px;line-height:14px;color:#111;font-weight:normal;">Sales Order Discount Detail</div>
<div class="t" style="left:926.5px;top:933.84px;font-size:12px;line-height:14px;color:#111;font-weight:normal;">Inherited</div>
<svg class="a" style="left:1219px;top:935px" width="12" height="12" viewBox="0 0 12 12"><use href="#chk"/><path d="M2.4 5.2 L4.5 9.3 L9.6 2.3" fill="none" stroke="#444" stroke-width="2.2"/></svg>
<div class="a" style="left:477px;top:956px;width:15px;height:28px;background:#f4f5f7"></div>
<div class="a" style="left:492px;top:956px;width:1px;height:28px;background:#e0e3e7"></div>
<div class="a" style="left:493px;top:956px;width:767px;height:28px;background:#ffffff"></div>
<div class="a" style="left:477px;top:984px;width:782px;height:1px;background:#e3e5e8"></div>
<svg class="a" style="left:503px;top:967px" width="13" height="5"><use href="#gleaf"/></svg>
<div class="t" style="left:526.3px;top:962.84px;font-size:12px;line-height:14px;color:#111;font-weight:normal;">Sales Order Adjust</div>
<div class="t" style="left:926.5px;top:962.84px;font-size:12px;line-height:14px;color:#111;font-weight:normal;">Inherited</div>
<svg class="a" style="left:1219px;top:964px" width="12" height="12" viewBox="0 0 12 12"><use href="#chk"/><path d="M2.4 5.2 L4.5 9.3 L9.6 2.3" fill="none" stroke="#444" stroke-width="2.2"/></svg>
<div class="a" style="left:477px;top:984px;width:782px;height:1px;background:#d8dbe0"></div>
</body></html>
